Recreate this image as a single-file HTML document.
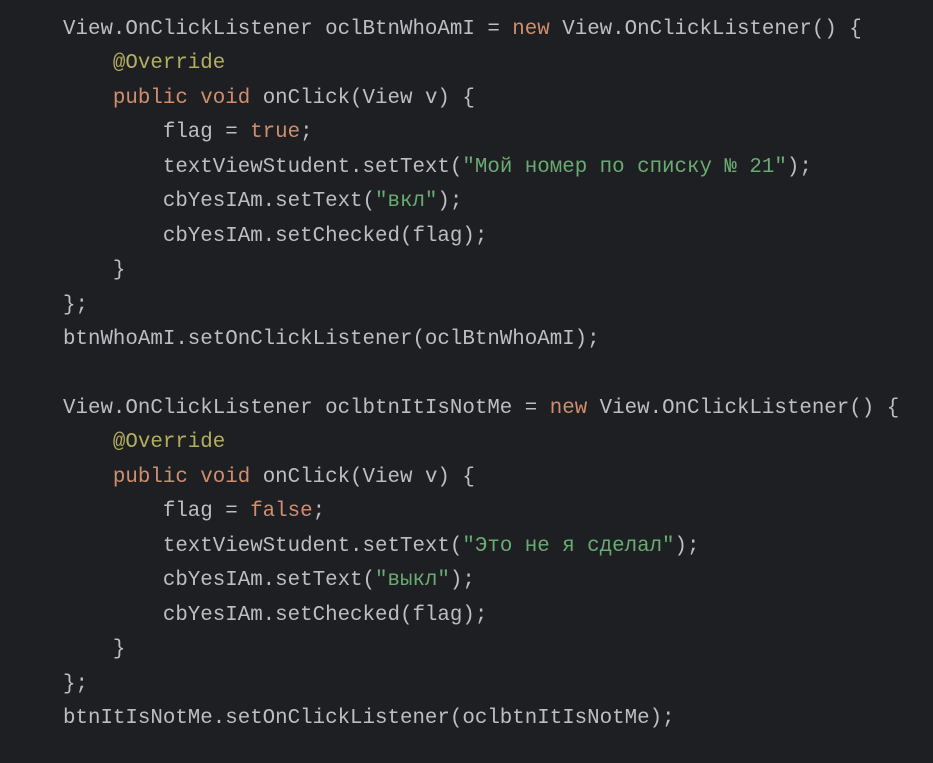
<!DOCTYPE html>
<html><head><meta charset="utf-8"><style>
html,body{margin:0;padding:0;background:#1e1f22;width:933px;height:763px;overflow:hidden}
pre{margin:0;position:absolute;left:63px;top:13px;font-family:"Liberation Mono",monospace;font-size:20.8px;line-height:34.45px;color:#bcbec4}
.k{color:#cf8e6d}.a{color:#b3ae60}.s{color:#6aab73}
</style></head><body>
<pre>View.OnClickListener oclBtnWhoAmI = <span class="k">new</span> View.OnClickListener() {
    <span class="a">@Override</span>
    <span class="k">public void</span> onClick(View v) {
        flag = <span class="k">true</span>;
        textViewStudent.setText(<span class="s">"Мой номер по списку № 21"</span>);
        cbYesIAm.setText(<span class="s">"вкл"</span>);
        cbYesIAm.setChecked(flag);
    }
};
btnWhoAmI.setOnClickListener(oclBtnWhoAmI);

View.OnClickListener oclbtnItIsNotMe = <span class="k">new</span> View.OnClickListener() {
    <span class="a">@Override</span>
    <span class="k">public void</span> onClick(View v) {
        flag = <span class="k">false</span>;
        textViewStudent.setText(<span class="s">"Это не я сделал"</span>);
        cbYesIAm.setText(<span class="s">"выкл"</span>);
        cbYesIAm.setChecked(flag);
    }
};
btnItIsNotMe.setOnClickListener(oclbtnItIsNotMe);</pre>
</body></html>
